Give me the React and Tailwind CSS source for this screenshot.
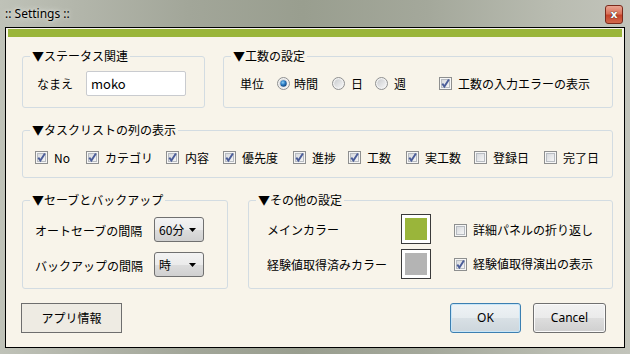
import React from "react";

function Check({ checked }) {
  return (
    <svg width="13" height="13" viewBox="0 0 13 13" className="shrink-0">
      <defs>
        <linearGradient id="cbg" x1="0" y1="0" x2="1" y2="1">
          <stop offset="0" stopColor="#d6d8dc" />
          <stop offset="1" stopColor="#f7f7f7" />
        </linearGradient>
      </defs>
      <rect x="0.5" y="0.5" width="12" height="12" fill="#f6f6f6" stroke="#8e8f8f" />
      <rect x="2.5" y="2.5" width="8" height="8" fill="url(#cbg)" stroke="#b8bcc2" />
      {checked && (
        <path d="M3.3 6.6 L5.4 9.6 L9.9 2.6" stroke="#4b5d99" strokeWidth="1.9" fill="none" strokeLinejoin="miter" />
      )}
    </svg>
  );
}

function Radio({ checked }) {
  return (
    <svg width="13" height="13" viewBox="0 0 13 13" className="shrink-0">
      <defs>
        <linearGradient id="rbg" x1="0" y1="0" x2="1" y2="1">
          <stop offset="0" stopColor="#c9cbce" />
          <stop offset="1" stopColor="#f6f6f6" />
        </linearGradient>
        <radialGradient id="rdot" cx="0.4" cy="0.35" r="0.7">
          <stop offset="0" stopColor="#8fd0f8" />
          <stop offset="0.5" stopColor="#2a7cc4" />
          <stop offset="1" stopColor="#0f3f78" />
        </radialGradient>
      </defs>
      <circle cx="6.5" cy="6.5" r="6" fill="#f2f2f2" stroke="#8e8f8f" />
      <circle cx="6.5" cy="6.5" r="4.3" fill="url(#rbg)" />
      {checked && <circle cx="6.5" cy="6.5" r="3.2" fill="url(#rdot)" />}
    </svg>
  );
}

function Select({ value }) {
  return (
    <div className="w-[50px] h-[25px] border border-[#707070] rounded-[3px] bg-[linear-gradient(to_bottom,#f3f3f3_0%,#ebebeb_50%,#dddddd_51%,#d0d0d0_100%)] flex items-center justify-between pl-[4px] pr-[7px] leading-[16px]">
      <span>{value}</span>
      <svg width="7" height="4" viewBox="0 0 7 4">
        <path d="M0 0 H7 L3.5 4 Z" fill="#000" />
      </svg>
    </div>
  );
}

function Swatch({ color }) {
  return (
    <div className="w-[30px] h-[30px] border border-[#3a3a3a] bg-white p-[3px] shrink-0">
      <div className={"w-full h-full " + color} />
    </div>
  );
}

function Group({ title, className, children }) {
  return (
    <fieldset className={"min-w-0 border border-[#d3dce2] rounded-[3px] " + className}>
      <legend className="ml-[7px] px-[2px] leading-[16px]">{title}</legend>
      {children}
    </fieldset>
  );
}

const cols = [
  ["No", true, "w-[51px]"],
  ["カテゴリ", true, "w-[80px]"],
  ["内容", true, "w-[57px]"],
  ["優先度", true, "w-[70px]"],
  ["進捗", true, "w-[55px]"],
  ["工数", true, "w-[58px]"],
  ["実工数", true, "w-[68px]"],
  ["登録日", false, "w-[70px]"],
  ["完了日", false, ""],
];

export default function App() {
  return (
    <div className="w-[630px] h-[354px] flex flex-col bg-[linear-gradient(90deg,#bfc2b8_0%,#b3b6ab_12%,#a2a699_30%,#999e8f_48%,#a4a89b_68%,#b9bcb1_88%,#c2c4bb_100%)] text-[12px] text-black font-['Noto_Sans_CJK_JP',sans-serif] overflow-hidden">
      {/* title bar */}
      <div className="h-[27px] flex items-start shrink-0">
        <div className="pl-[5px] pt-[6px] leading-[16px] text-[12px] font-['Noto_Sans','Noto_Sans_CJK_JP',sans-serif] [text-shadow:0_0_6px_#e8e9e4,0_0_3px_#e8e9e4]">
          :: Settings ::
        </div>
        <div className="ml-auto mt-[5px] mr-[7px] w-[18px] h-[19px] rounded-[3px] border border-[#7a2a1c] bg-[linear-gradient(to_bottom,#e9a491_0%,#d9725a_45%,#c4432a_55%,#d2694c_100%)] flex items-center justify-center">
          <span className="text-white text-[11px] font-bold leading-[11px] font-['DejaVu_Sans',sans-serif] [text-shadow:0_0_1px_#333,0_0_1px_#333]">x</span>
        </div>
      </div>
      {/* client */}
      <div className="mx-[5px] mb-[6px] flex-1 border border-black bg-[#f8f4ea] flex flex-col pt-[1px]">
        <div className="mx-[2px] h-[8px] bg-[#9ab53a] shrink-0" />

        {/* row 1 */}
        <div className="flex pl-[16px] pr-[11px] mt-[11px] gap-[18px]">
          <Group title="▼ステータス関連" className="w-[183px] pb-[4px]">
            <div className="h-[39px] flex items-center pl-[14px]">
              <span className="leading-[16px]">なまえ</span>
              <div className="ml-[13px] w-[100px] h-[25px] bg-white border border-[#c9cbcf] rounded-[2px] flex items-center pl-[4px] leading-[16px] text-[13px]">
                moko
              </div>
            </div>
          </Group>
          <Group title="▼工数の設定" className="flex-1 pb-[4px]">
            <div className="h-[39px] flex items-center pl-[16px] leading-[16px]">
              <span className="w-[37px]">単位</span>
              <div className="w-[55px] flex items-center gap-[4px]"><Radio checked /><span>時間</span></div>
              <div className="w-[43px] flex items-center gap-[6px]"><Radio /><span>日</span></div>
              <div className="w-[64px] flex items-center gap-[6px]"><Radio /><span>週</span></div>
              <div className="flex items-center gap-[6px]"><Check checked /><span>工数の入力エラーの表示</span></div>
            </div>
          </Group>
        </div>

        {/* row 2 */}
        <div className="flex pl-[16px] pr-[11px] mt-[14px]">
          <Group title="▼タスクリストの列の表示" className="flex-1">
            <div className="h-[39px] flex items-center pl-[12px] leading-[16px]">
              {cols.map(([t, c, w]) => (
                <div key={t} className={"flex items-center gap-[6px] shrink-0 " + w}>
                  <Check checked={c} />
                  <span className="font-['Noto_Sans_CJK_JP',sans-serif]">{t}</span>
                </div>
              ))}
            </div>
          </Group>
        </div>

        {/* row 3 */}
        <div className="flex pl-[16px] pr-[11px] mt-[14px] gap-[20px]">
          <Group title="▼セーブとバックアップ" className="w-[206px] pt-[9px] pb-[11px]">
            <div className="flex flex-col gap-[10px] pl-[12px] leading-[16px]">
              <div className="h-[25px] flex items-center">
                <span className="w-[119px] pt-[2px]">オートセーブの間隔</span>
                <Select value="60分" />
              </div>
              <div className="h-[25px] flex items-center">
                <span className="w-[119px] pt-[2px]">バックアップの間隔</span>
                <Select value="時" />
              </div>
            </div>
          </Group>
          <Group title="▼その他の設定" className="flex-1 pt-[6px] pb-[9px]">
            <div className="flex flex-col gap-[5px] pl-[18px] leading-[16px]">
              <div className="h-[30px] flex items-center">
                <span className="w-[134px] pt-[2px]">メインカラー</span>
                <Swatch color="bg-[#9ab53a]" />
                <div className="ml-[23px] flex items-center gap-[6px] pt-[2px]"><Check /><span>詳細パネルの折り返し</span></div>
              </div>
              <div className="h-[30px] flex items-center">
                <span className="w-[134px] pt-[1px]">経験値取得済みカラー</span>
                <Swatch color="bg-[#b4b4b4]" />
                <div className="ml-[23px] flex items-center gap-[6px]"><Check checked /><span>経験値取得演出の表示</span></div>
              </div>
            </div>
          </Group>
        </div>

        {/* buttons */}
        <div className="flex items-center pl-[15px] pr-[18px] mt-[14px]">
          <div className="w-[101px] h-[30px] bg-[#eeebe3] border border-[#6e6e6e] flex items-center justify-center leading-[16px]">
            アプリ情報
          </div>
          <div className="ml-auto w-[71px] h-[30px] rounded-[3px] border border-[#3c7fb1] bg-[linear-gradient(to_bottom,#eef3f6_0%,#e6ecef_50%,#d8e0e5_51%,#cdd6dc_100%)] shadow-[inset_0_0_0_1px_#c8e6f8] flex items-center justify-center leading-[16px] font-['Noto_Sans',sans-serif]">
            OK
          </div>
          <div className="ml-[12px] w-[73px] h-[30px] rounded-[3px] border border-[#707070] bg-[linear-gradient(to_bottom,#f2f2f2_0%,#ebebeb_50%,#dddddd_51%,#cfcfcf_100%)] shadow-[inset_0_0_0_1px_#fafafa] flex items-center justify-center leading-[16px] font-['Noto_Sans',sans-serif]">
            Cancel
          </div>
        </div>
      </div>
    </div>
  );
}
